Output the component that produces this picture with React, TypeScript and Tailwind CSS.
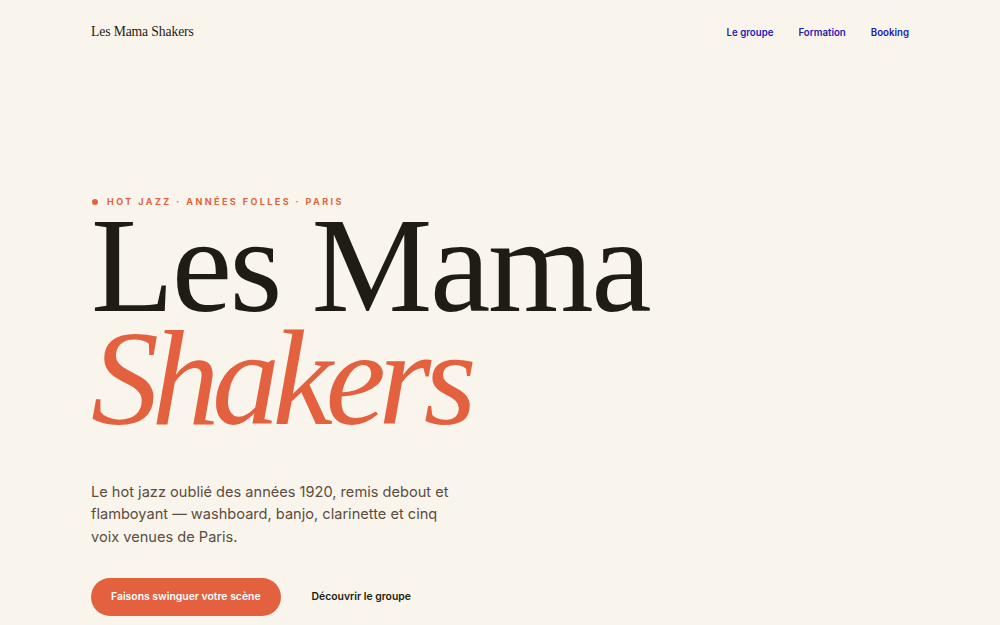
export default function App() {
  return (
    <div className="min-h-screen bg-[#f9f5ec] font-['Inter',sans-serif]">
      <div className="px-[91px]">
        <header className="flex items-center justify-between h-[65px]">
          <a className="font-['Liberation_Serif',serif] text-[13.7px] tracking-[-0.01em] text-[#1f1c14]">
            Les Mama Shakers
          </a>
          <nav className="flex gap-[25px] pt-[2px] text-[9.7px] font-semibold text-[#1d1ab8]">
            <a>Le groupe</a>
            <a>Formation</a>
            <a>Booking</a>
          </nav>
        </header>

        <section className="pt-[130px]">
          <div className="flex items-center gap-[9px] text-[9px] font-bold tracking-[0.27em] text-[#e2623f]">
            <span className="w-[6px] h-[6px] rounded-full bg-[#e2623f] ml-[1px]" />
            <span>HOT JAZZ · ANNÉES FOLLES · PARIS</span>
          </div>
          <h1 className="font-['Liberation_Serif',serif] text-[136px] leading-[113px] tracking-[-0.018em] text-[#1f1c14]">
            <span className="block">Les Mama</span>
            <span className="block italic text-[#e3613e] tracking-[-0.055em]">Shakers</span>
          </h1>
          <p className="mt-[46px] max-w-[366px] text-[14.6px] leading-[22.5px] text-[#5c4d3e]">
            Le hot jazz oublié des années 1920, remis debout et flamboyant — washboard, banjo, clarinette et cinq voix venues de Paris.
          </p>
          <div className="mt-[30px] flex items-center gap-[31px]">
            <button className="h-[38px] px-[20px] rounded-full bg-[#e3613e] text-white text-[10.4px] font-semibold">
              Faisons swinguer votre scène
            </button>
            <a className="text-[10.4px] font-semibold text-[#1f1c14]">Découvrir le groupe</a>
          </div>
        </section>
      </div>
    </div>
  );
}
